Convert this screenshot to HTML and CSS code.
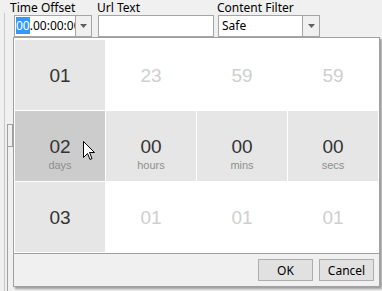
FILE: index.html
```html
<!DOCTYPE html>
<html lang="en">
<head>
    <meta charset="UTF-8">
    <meta name="viewport" content="width=device-width, initial-scale=1.0">
    <title>Time Offset Picker</title>
    <link rel="stylesheet" href="styles.css">
</head>
<body>
    <div class="backdrop">
        <span class="rail rail-outer"></span>
        <span class="rail rail-inner"></span>
        <span class="rail-tab"></span>
    </div>
    <div class="toolbar">
        <div class="field field-time">
            <label>Time Offset</label>
            <div class="combo">
                <span class="combo-text"><span class="sel">00</span>.00:00:00</span>
                <span class="combo-btn"><svg width="7" height="4" viewBox="0 0 7 4"><path d="M0 0h7L3.5 4z" fill="#606060"/></svg></span>
            </div>
        </div>
        <div class="field field-url">
            <label>Url Text</label>
            <div class="textbox"></div>
        </div>
        <div class="field field-filter">
            <label>Content Filter</label>
            <div class="combo">
                <span class="combo-text">Safe</span>
                <span class="combo-btn"><svg width="7" height="4" viewBox="0 0 7 4"><path d="M0 0h7L3.5 4z" fill="#606060"/></svg></span>
            </div>
        </div>
    </div>
    <div class="picker">
        <div class="grid">
            <div class="cell cell-day"><span class="num">01</span></div>
            <div class="cell"><span class="num">23</span></div>
            <div class="cell"><span class="num">59</span></div>
            <div class="cell"><span class="num">59</span></div>

            <div class="cell cell-day cell-hover"><span class="num">02</span><span class="unit">days</span></div>
            <div class="cell cell-current"><span class="num">00</span><span class="unit">hours</span></div>
            <div class="cell cell-current"><span class="num">00</span><span class="unit">mins</span></div>
            <div class="cell cell-current"><span class="num">00</span><span class="unit">secs</span></div>

            <div class="cell cell-day"><span class="num">03</span></div>
            <div class="cell"><span class="num">01</span></div>
            <div class="cell"><span class="num">01</span></div>
            <div class="cell"><span class="num">01</span></div>
        </div>
        <div class="footer">
            <button class="btn">OK</button>
            <button class="btn">Cancel</button>
        </div>
    </div>
    <svg class="cursor" width="13" height="19" viewBox="0 0 13 19">
        <path d="M0.5 0.5V16.5L4.5 12.5L7 18.5L9 17.5L6.5 11.5H11.5Z" fill="#fff" stroke="#000" stroke-width="1" stroke-linejoin="miter"/>
    </svg>
</body>
</html>
```

FILE: styles.css
```css
body {
    margin: 0;
    background: #f0f0f0;
    font-family: 'Noto Sans', 'Open Sans', sans-serif;
    font-size: 12px;
    color: #000;
    width: 382px;
    height: 291px;
    overflow: hidden;
    position: relative;
}
/* window behind the popup */
.backdrop .rail {
    position: absolute;
    top: 13px;
    bottom: 0;
    width: 1px;
}
.rail-outer { left: 4px; background: #c8c8c8; }
.rail-inner { left: 7px; top: 124px !important; background: #a0a0a0; }
.rail-tab {
    position: absolute;
    left: 7px;
    top: 124px;
    width: 6px;
    height: 23px;
    border: 1px solid #a0a0a0;
    border-left: none;
    box-sizing: border-box;
}
.toolbar {
    display: flex;
    padding-left: 10px;
    height: 37px;
}
.field {
    display: flex;
    flex-direction: column;
}
.field label {
    line-height: 15px;
    height: 15px;
    color: #000;
}
.field-time { width: 82px; margin-right: 5px; }
.field-time .combo { margin-left: 4px; width: 78px; }
.field-url { width: 117px; margin-right: 3px; }
.field-url .textbox { margin-left: 1px; }
.field-filter { width: 103px; }
.field-filter .combo { margin-left: 1px; width: 102px; }
.field-filter .combo-btn { width: 16px; }

.combo, .textbox {
    height: 22px;
    box-sizing: border-box;
    border: 1px solid #a5a5a5;
    background: #fff;
}
.combo {
    display: flex;
}
.combo-text {
    flex: 1;
    overflow: hidden;
    white-space: nowrap;
    padding: 2px 0 0 1px;
    line-height: 15px;
}
.field-filter .combo-text { padding-left: 3px; }
.sel {
    background: #3399ff;
    color: #fff;
}
.combo-btn {
    width: 15px;
    border-left: 1px solid #a5a5a5;
    background: #f0f0f0;
    display: flex;
    align-items: center;
    justify-content: center;
}

.picker {
    margin-left: 13px;
    width: 367px;
    border: 1px solid #a0a0a0;
    box-sizing: border-box;
    background: #fff;
    box-shadow: 2px 2px 2px rgba(0, 0, 0, 0.35);
}
.grid {
    display: grid;
    grid-template-columns: repeat(4, 90px);
    grid-template-rows: repeat(3, 70px);
    gap: 1px;
    padding: 2px 1px 1px 1px;
}
.cell {
    display: flex;
    flex-direction: column;
    align-items: center;
    justify-content: center;
    font-family: 'Liberation Sans', Arial, sans-serif;
    color: #cfcfcf;
}
.cell-day, .cell-current {
    background: #e6e6e6;
    color: #333;
}
.cell-hover {
    background: #cccccc;
}
.num {
    font-size: 19px;
    line-height: 20px;
    padding-top: 1px;
}
.unit {
    font-size: 11px;
    line-height: 12px;
    color: #8e8e8e;
    margin-top: 2px;
    margin-bottom: -14px;
}
.footer {
    border-top: 1px solid #a0a0a0;
    background: #f0f0f0;
    height: 32px;
    display: flex;
    justify-content: flex-end;
    align-items: center;
    gap: 6px;
    padding-right: 5px;
}
.btn {
    width: 55px;
    height: 22px;
    background: #e1e1e1;
    border: 1px solid #adadad;
    font-family: 'Noto Sans', 'Open Sans', sans-serif;
    font-size: 12px;
    color: #000;
    padding: 0;
}
.cursor {
    position: absolute;
    left: 83px;
    top: 141px;
}
```
